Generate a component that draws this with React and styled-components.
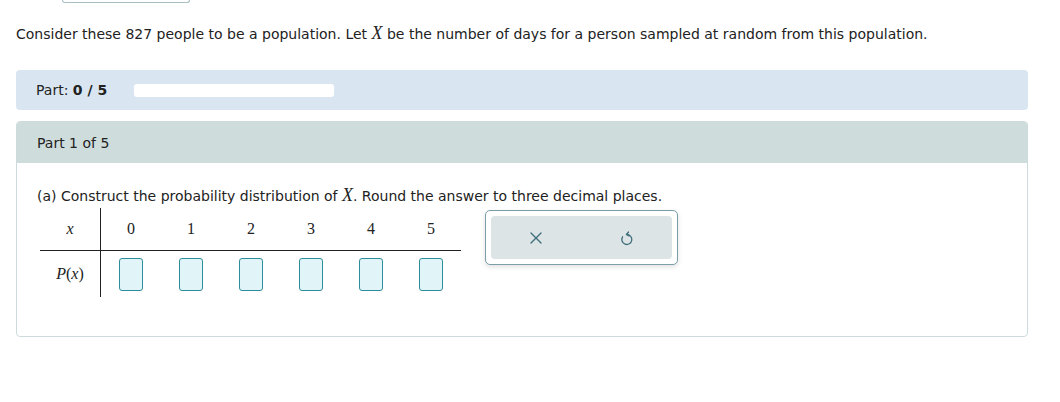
import React from "react";
import styled, { createGlobalStyle } from "styled-components";

const Global = createGlobalStyle`
  html, body { margin: 0; padding: 0; background: #fff; }
  body { font-family: "DejaVu Sans", Verdana, sans-serif; color: #222; }
`;

const Page = styled.div`
  padding: 0 32px 0 16px;
  width: 1012px;
`;

const TopStub = styled.div`
  margin-left: 46px;
  width: 126px;
  height: 2px;
  border: 1px solid #a8bec3;
  border-top: none;
  border-radius: 0 0 4px 4px;
`;

const Intro = styled.p`
  margin: 23px 0 0;
  font-size: 14px;
  line-height: 16px;
`;

const MathVar = styled.span`
  font-family: "Liberation Serif", "Times New Roman", serif;
  font-style: italic;
  font-size: 18px;
  line-height: 0;
`;

const ProgressBar = styled.div`
  margin-top: 28px;
  height: 40px;
  background: #d9e6f1;
  border-radius: 4px;
  display: flex;
  align-items: center;
  padding-left: 20px;
  font-size: 14px;
  gap: 27px;
`;

const Track = styled.div`
  width: 200px;
  height: 13px;
  background: #fff;
  border-radius: 3px;
`;

const PartCard = styled.div`
  margin-top: 11px;
  border: 1px solid #cddbdc;
  border-radius: 4px;
  overflow: hidden;
`;

const PartHeader = styled.div`
  height: 41px;
  background: #cedcdc;
  display: flex;
  align-items: center;
  padding-left: 20px;
  font-size: 14px;
`;

const PartBody = styled.div`
  padding: 24px 0 39px 20px;
`;

const Question = styled.p`
  margin: 0;
  font-size: 14px;
  line-height: 18px;
`;

const Row = styled.div`
  display: flex;
  align-items: flex-start;
  margin-top: 3px;
  gap: 24px;
`;

const Table = styled.table`
  border-collapse: collapse;
  font-family: "Liberation Serif", "Times New Roman", serif;
  font-size: 16px;
  margin-left: 3px;
`;

const Cell = styled.td`
  width: 60px;
  height: ${(p) => (p.$top ? "42px" : "46px")};
  text-align: center;
  vertical-align: middle;
  padding: 0;
  font-style: ${(p) => (p.$italic ? "italic" : "normal")};
  border-right: ${(p) => (p.$label ? "1px solid #222" : "none")};
  border-bottom: ${(p) => (p.$top ? "1px solid #222" : "none")};
`;

const InputBox = styled.div`
  width: 22px;
  height: 31px;
  margin: 0 auto;
  border: 1px solid #2c8c9c;
  border-radius: 3px;
  background: #e1f5f9;
`;

const ToolBox = styled.div`
  margin-top: 2px;
  width: 181px;
  height: 43px;
  padding: 5px;
  border: 1px solid #7b9ea8;
  border-radius: 5px;
  box-shadow: 0 2px 5px rgba(0, 0, 0, 0.12);
  background: #fff;
`;

const ToolInner = styled.div`
  height: 100%;
  border-radius: 4px;
  background: #dde4e6;
  display: flex;
  align-items: center;
  justify-content: space-around;
`;

const IconBtn = styled.button`
  border: none;
  background: transparent;
  padding: 0;
  width: 30px;
  height: 30px;
  display: flex;
  align-items: center;
  justify-content: center;
  color: #3f6e7c;
`;

const XIcon = () => (
  <svg width="12" height="12" viewBox="0 0 12 12" fill="none" stroke="currentColor" strokeWidth="1.4" strokeLinecap="round">
    <path d="M1 1 L11 11 M11 1 L1 11" />
  </svg>
);

const UndoIcon = () => (
  <svg width="14" height="16" viewBox="0 0 14 16" fill="none" stroke="currentColor" strokeWidth="1.3" strokeLinecap="round" strokeLinejoin="round">
    <path d="M6.5 4.5 A5 5 0 1 1 2.6 6.8" />
    <path d="M8.5 2 L6.5 4.5 L9 6" />
  </svg>
);

export default function App() {
  const vals = [0, 1, 2, 3, 4, 5];
  return (
    <>
      <Global />
      <Page>
        <TopStub />
        <Intro>
          Consider these 827 people to be a population. Let <MathVar>X</MathVar> be the number of days for a person sampled at random from this population.
        </Intro>
        <ProgressBar>
          <span>
            Part: <b>0 / 5</b>
          </span>
          <Track />
        </ProgressBar>
        <PartCard>
          <PartHeader>Part 1 of 5</PartHeader>
          <PartBody>
            <Question>
              (a) Construct the probability distribution of <MathVar>X</MathVar>. Round the answer to three decimal places.
            </Question>
            <Row>
              <Table>
                <tbody>
                  <tr>
                    <Cell $label $italic $top>x</Cell>
                    {vals.map((v) => (
                      <Cell key={v} $top>{v}</Cell>
                    ))}
                  </tr>
                  <tr>
                    <Cell $label>
                      <i>P</i>(<i>x</i>)
                    </Cell>
                    {vals.map((v) => (
                      <Cell key={v}>
                        <InputBox />
                      </Cell>
                    ))}
                  </tr>
                </tbody>
              </Table>
              <ToolBox>
                <ToolInner>
                  <IconBtn aria-label="clear"><XIcon /></IconBtn>
                  <IconBtn aria-label="undo"><UndoIcon /></IconBtn>
                </ToolInner>
              </ToolBox>
            </Row>
          </PartBody>
        </PartCard>
      </Page>
    </>
  );
}
